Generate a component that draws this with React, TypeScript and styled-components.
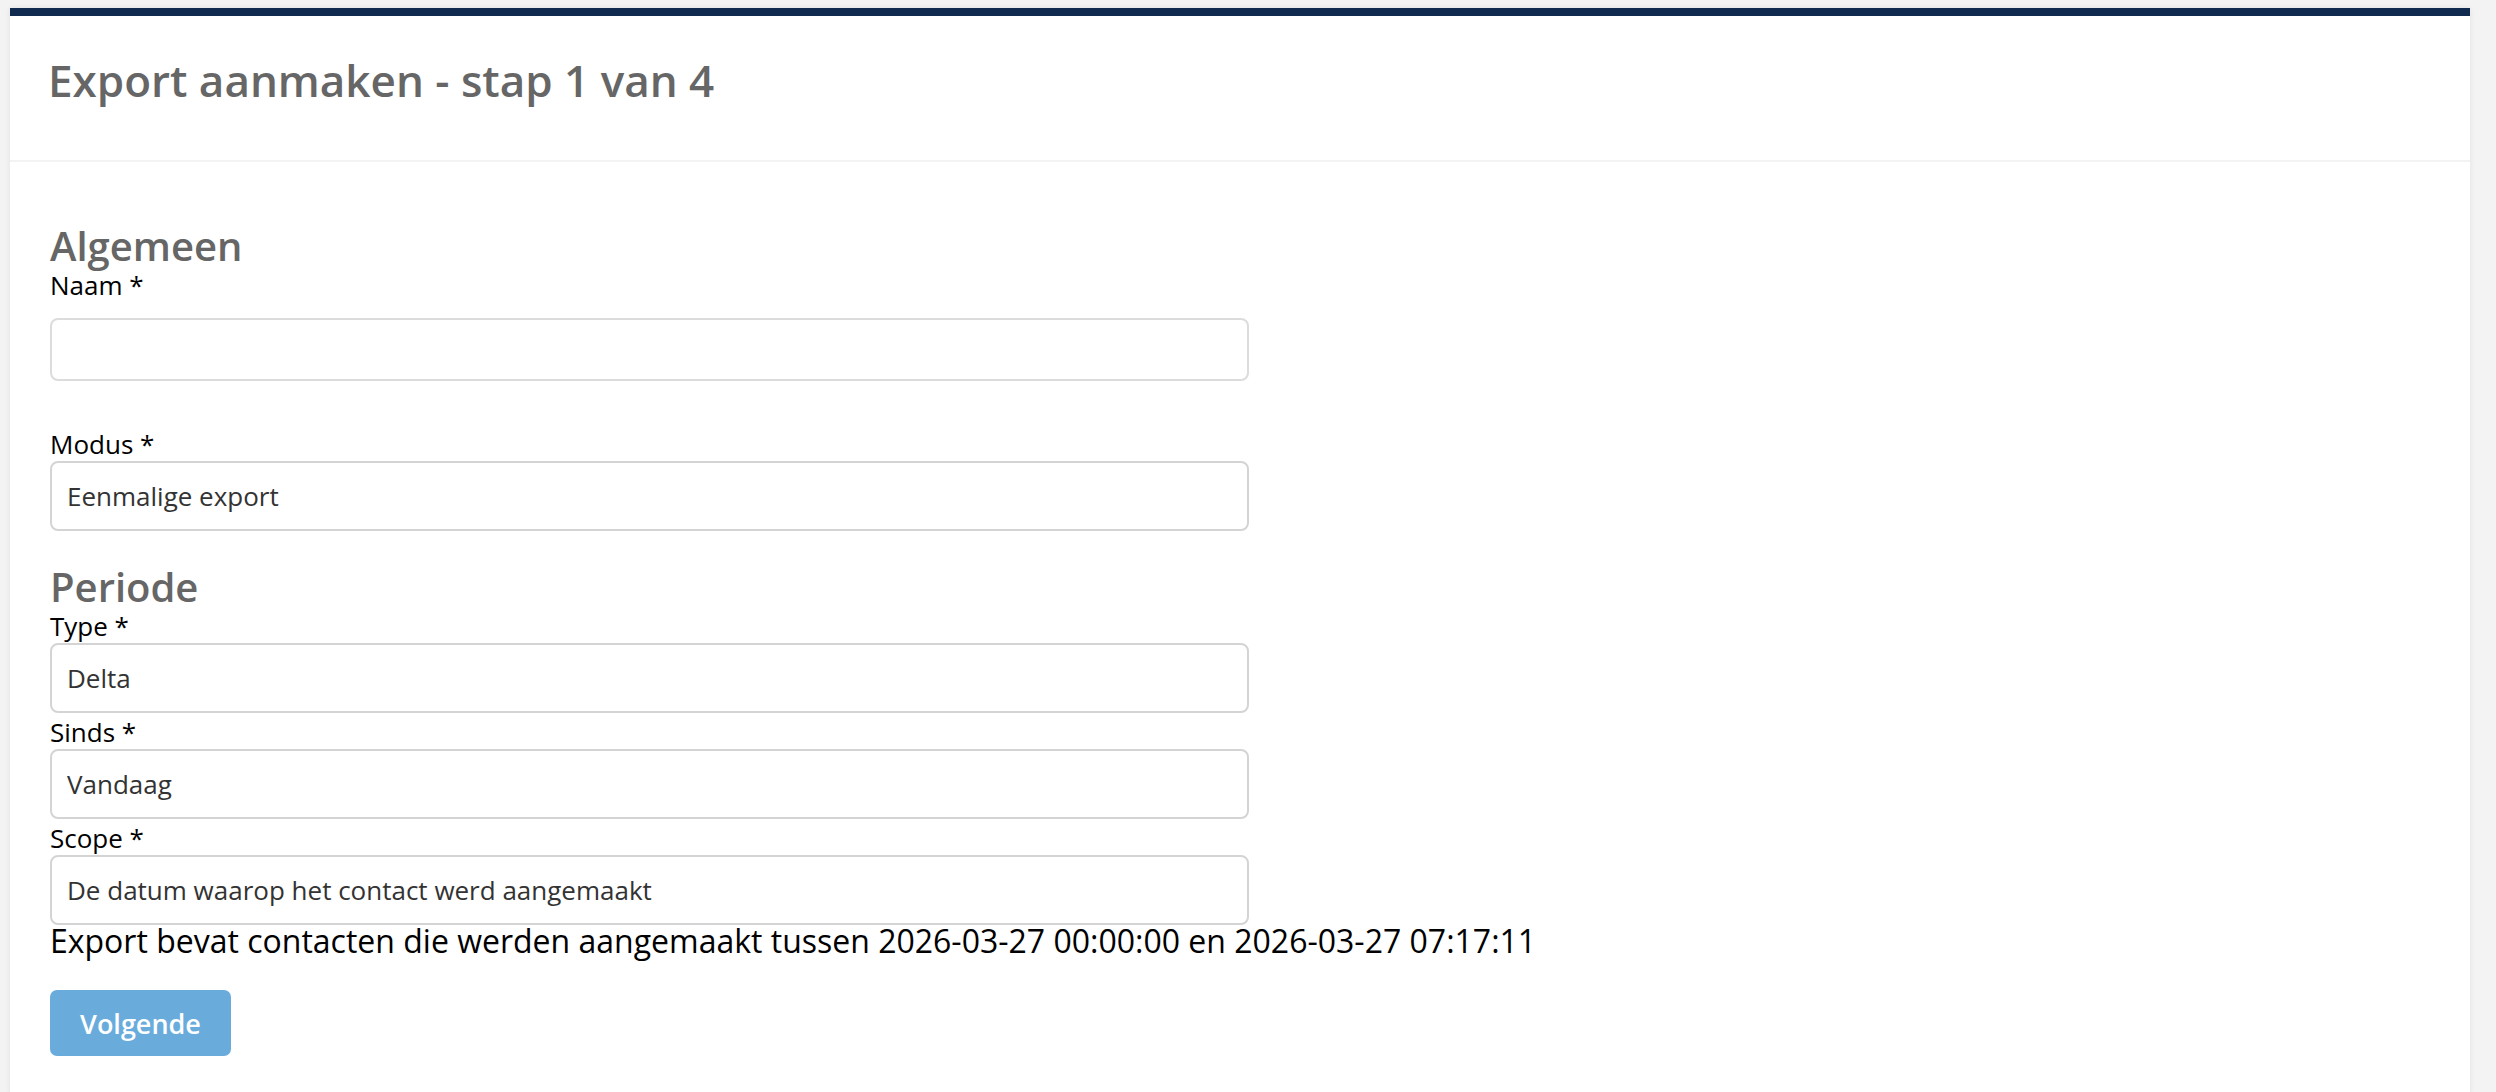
import { FC } from "react";
import styled, { createGlobalStyle } from "styled-components";

const GlobalStyle = createGlobalStyle`
  html, body {
    margin: 0;
    padding: 0;
    background: #f3f3f3;
    font-family: "Open Sans", "Liberation Sans", sans-serif;
  }
  * {
    box-sizing: border-box;
  }
`;

const Field: FC<{ label: string; value?: string; text?: boolean }> = ({
  label,
  value = "",
  text = false,
}) => (
  <FieldBox>
    <Label>{label}</Label>
    {text ? (
      <TextInput type="text" defaultValue={value} />
    ) : (
      <Select defaultValue={value}>
        <option value={value}>{value}</option>
      </Select>
    )}
  </FieldBox>
);

export default function App() {
  return (
    <Page>
      <GlobalStyle />
      <Card>
        <Header>
          <Title>Export aanmaken - stap 1 van 4</Title>
        </Header>
        <Body>
          <SectionTitle>Algemeen</SectionTitle>
          <Field label="Naam *" text />
          <Spacer />
          <Field label="Modus *" value="Eenmalige export" />
          <SectionTitle $gap>Periode</SectionTitle>
          <Field label="Type *" value="Delta" />
          <Field label="Sinds *" value="Vandaag" />
          <Field
            label="Scope *"
            value="De datum waarop het contact werd aangemaakt"
          />
          <Info>
            Export bevat contacten die werden aangemaakt tussen 2026-03-27
            00:00:00 en 2026-03-27 07:17:11
          </Info>
          <NextButton disabled>Volgende</NextButton>
        </Body>
      </Card>
    </Page>
  );
}

const Page = styled.div`
  min-height: 100vh;
  padding: 8px 26px 0 10px;
`;

const Card = styled.div`
  background: #fff;
  border-top: 8px solid #0f2a4e;
  min-height: calc(100vh - 8px);
  box-shadow: 0 0 6px rgba(0, 0, 0, 0.08);
`;

const Header = styled.div`
  height: 146px;
  padding: 37px 38px 0;
  border-bottom: 2px solid #f3f3f3;
`;

const Title = styled.h3`
  margin: 0;
  font-size: 44px;
  line-height: 54px;
  font-weight: 600;
  color: #666;
`;

const Body = styled.div`
  padding: 64px 40px 40px;
`;

const SectionTitle = styled.h4<{ $gap?: boolean }>`
  margin: ${({ $gap }) => ($gap ? "36px" : "0")} 0 0;
  font-size: 40px;
  line-height: 40px;
  font-weight: 600;
  color: #666;
`;

const FieldBox = styled.div`
  display: flex;
  flex-direction: column;
  width: 1199px;
`;

const Label = styled.label`
  margin-top: 2px;
  font-size: 26px;
  line-height: 34px;
  color: #000;
`;

const TextInput = styled.input`
  margin-top: 16px;
  height: 63px;
  border: 2px solid #dcdcdc;
  border-radius: 8px;
  padding: 0 15px;
  font-family: inherit;
  font-size: 26px;
  color: #333;
  outline: none;
`;

const Select = styled.select`
  appearance: none;
  -webkit-appearance: none;
  height: 70px;
  border: 2px solid #d4d4d4;
  border-radius: 8px;
  padding: 0 15px;
  background: #fff;
  font-family: inherit;
  font-size: 26px;
  color: #333;
  outline: none;
`;

const Spacer = styled.div`
  height: 44px;
`;

const Info = styled.p`
  margin: 0;
  font-size: 32px;
  line-height: 32px;
  color: #000;
`;

const NextButton = styled.button`
  margin-top: 33px;
  width: 181px;
  height: 66px;
  border: none;
  border-radius: 7px;
  background: #69acdc;
  color: #fff;
  font-family: inherit;
  font-size: 27px;
  font-weight: 600;
  cursor: not-allowed;
`;
